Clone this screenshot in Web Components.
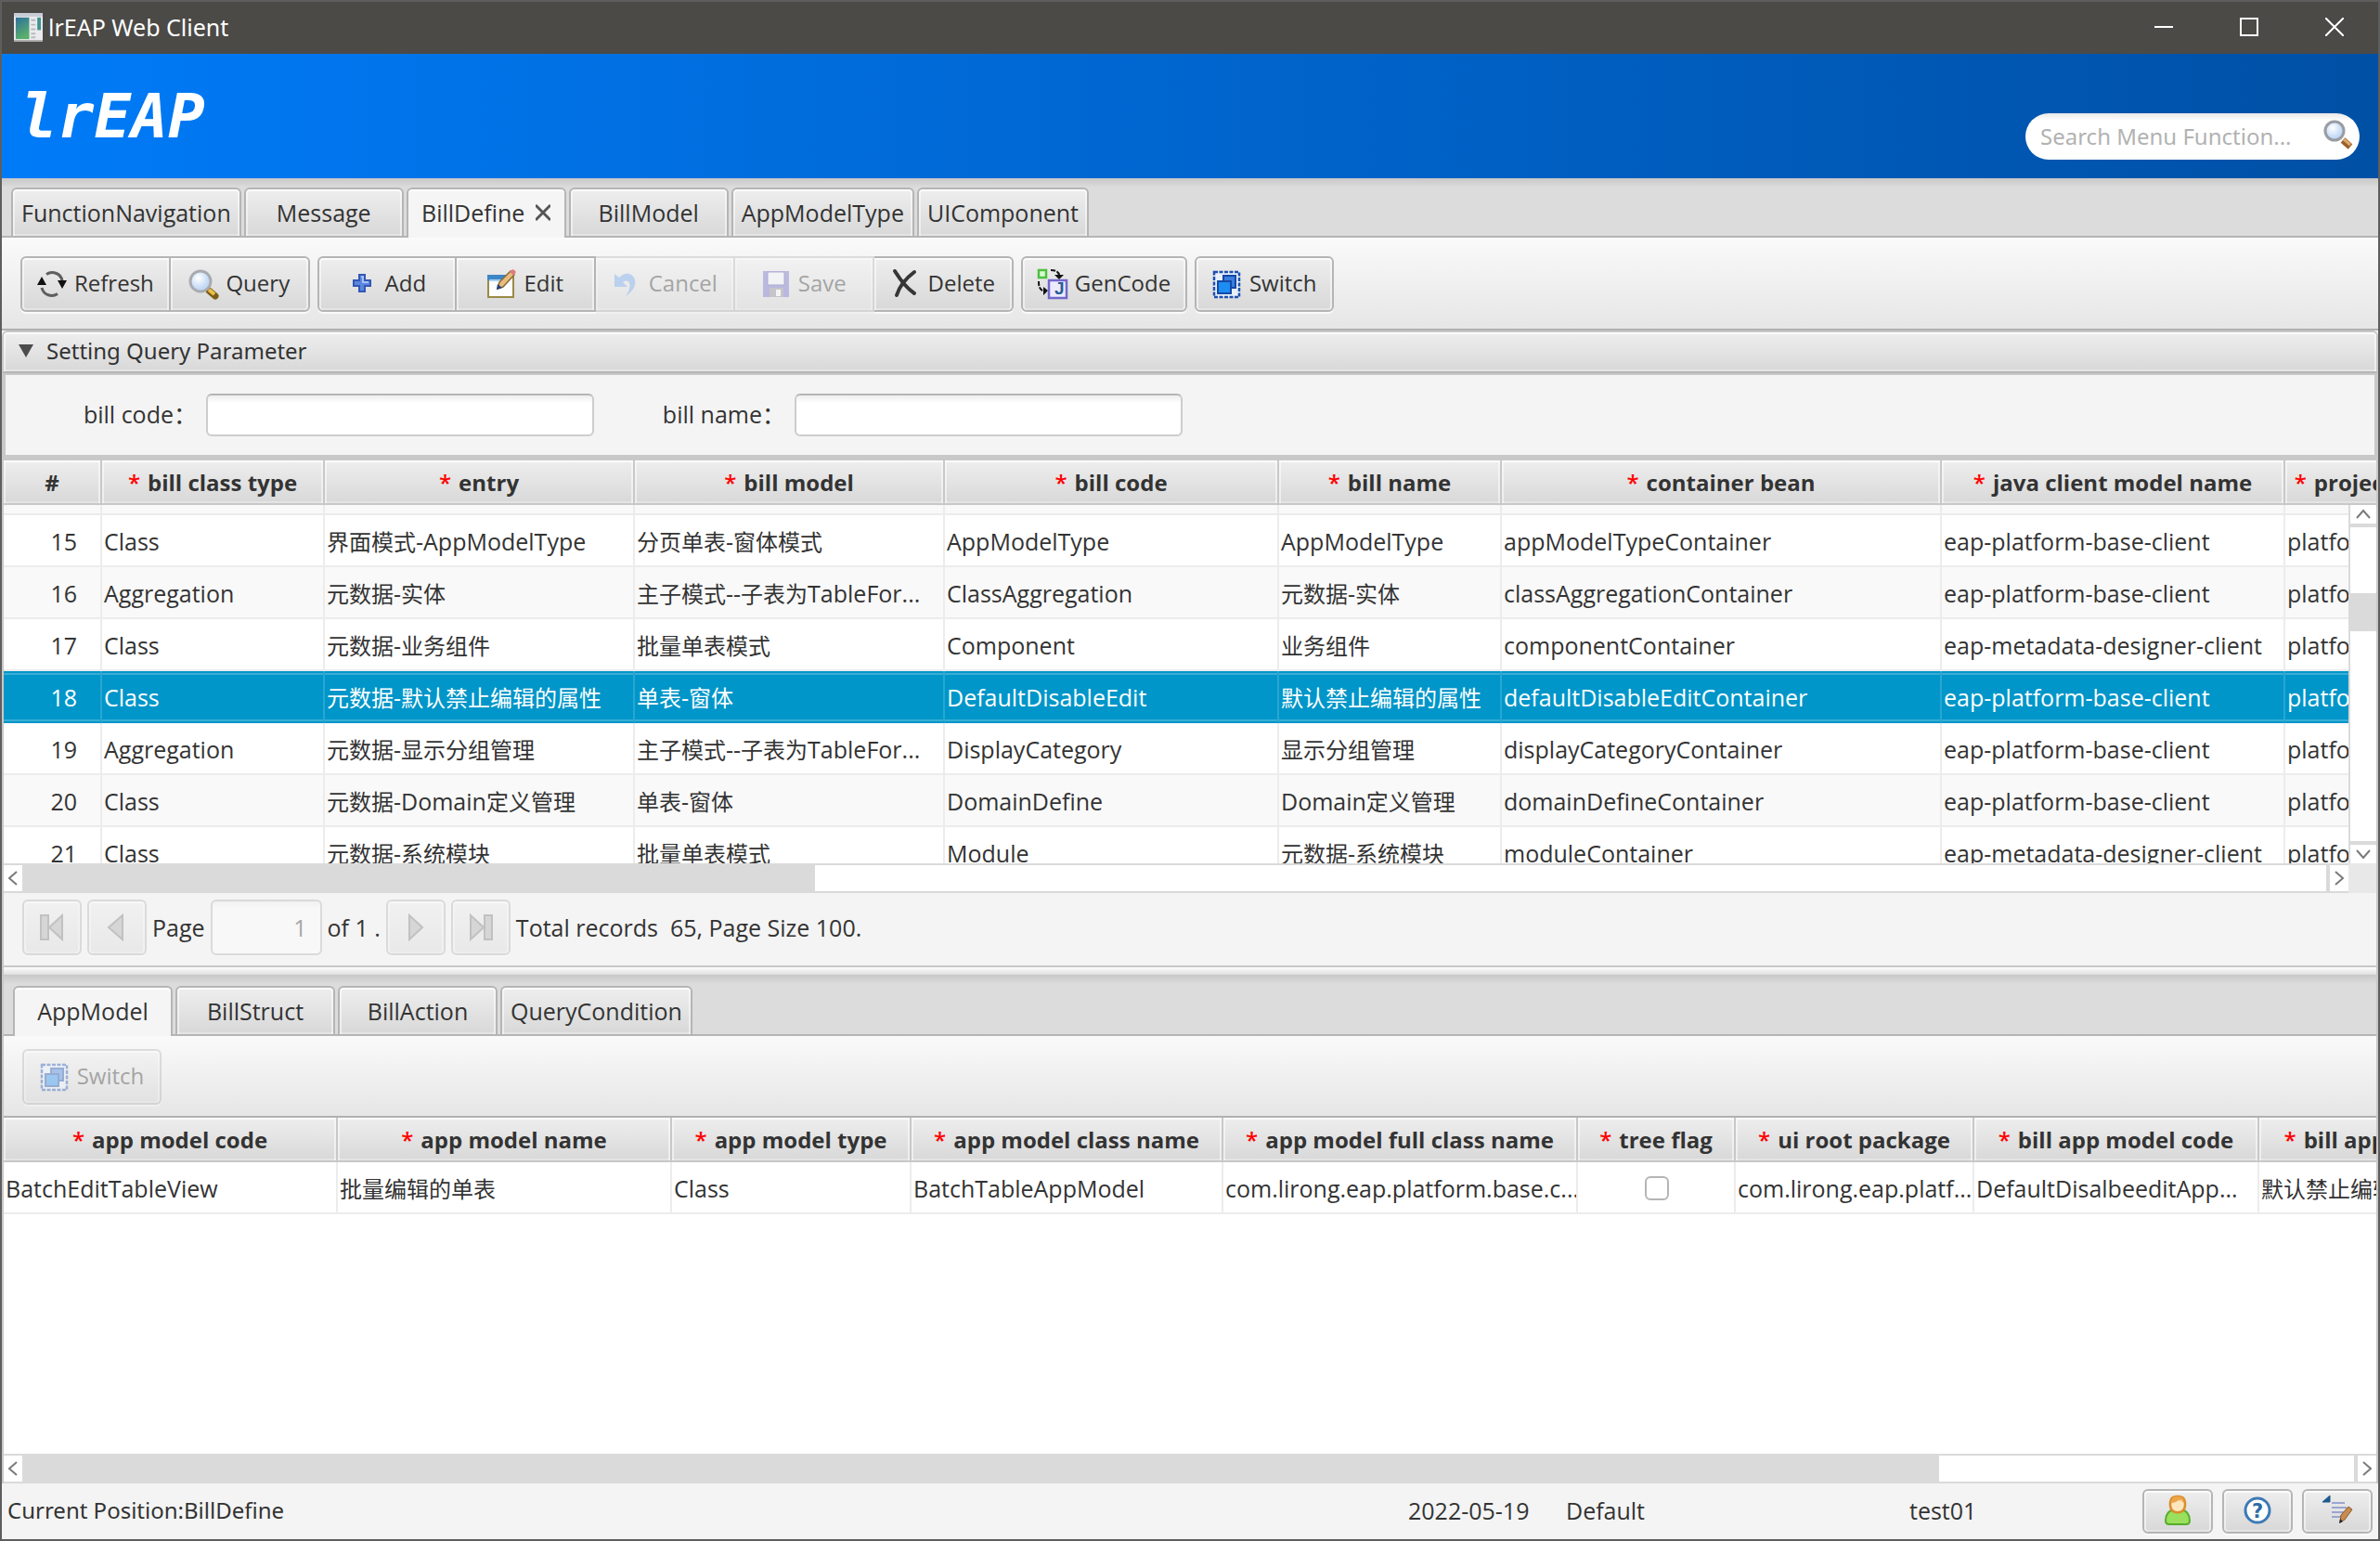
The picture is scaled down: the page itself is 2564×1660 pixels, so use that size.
<!DOCTYPE html>
<html lang="en">
<head>
<meta charset="utf-8">
<title>lrEAP Web Client</title>
<style>
  html, body { margin: 0; height: 100%; }
  body {
    --line: #c8c8c8;
    --edge: #b5b5b5;
    --face: linear-gradient(#eeeeee, #d8d8d8);
    --glow: inset 0 2px #fcfcfc, inset 2px 0 rgba(255,255,255,.5), inset -2px 0 rgba(255,255,255,.5), inset 0 -2px rgba(255,255,255,.3);
    --wide: "Noto Sans", "Noto Sans CJK SC", sans-serif;
    font: 24px "Open Sans", "Noto Sans", "Noto Sans CJK SC", sans-serif;
    color: #333;
    background: #f4f4f4;
  }
</style>
</head>
<body>
<eap-window></eap-window>

<script>
const ICONS = {
  app: `<rect x="0" y="0" width="32" height="32" fill="#e9ebee"/><rect x="0" y="0" width="32" height="4" fill="#c9cdd6"/><rect x="2" y="5" width="15" height="24" fill="url(#a)"/><defs><linearGradient id="a" x2="0.4" y2="1"><stop stop-color="#2f6f9f"/><stop offset="1" stop-color="#58b06a"/></linearGradient></defs><path d="M19 8h5M19 13h5M19 18h5M19 23h5M19 27h5" stroke="#bbb" stroke-width="2"/><rect x="26" y="5" width="4" height="14" fill="#3f9290"/><path d="M0 31h32" stroke="#aaa" stroke-width="2"/>`,
  refresh: `<g fill="none" stroke="#5e5e5e" stroke-width="3"><path d="M10 5.500C16 1.500 25 4 27 12"/><path d="M22 26.500C16 30.500 7 28 5 20"/></g><path d="M0 17l5-9 5 9zM22 12h10l-5 9z" fill="#111"/>`,
  query: `<defs><radialGradient id="l" cx=".4" cy=".35"><stop stop-color="#fff"/><stop offset="1" stop-color="#c3daf6"/></radialGradient></defs><path d="M22 23l7 6" stroke="#7c6016" stroke-width="7" stroke-linecap="round"/><path d="M22 22l6 5" stroke="#ecc04a" stroke-width="4"/><circle cx="13" cy="13" r="11" fill="url(#l)" stroke="#a9abb0" stroke-width="3"/>`,
  search: `<defs><radialGradient id="l" cx=".4" cy=".35"><stop stop-color="#fff"/><stop offset="1" stop-color="#c3daf6"/></radialGradient></defs><path d="M22 21l8 7" stroke="#9a602c" stroke-width="7"/><path d="M23 20l7 6" stroke="#dca66e" stroke-width="3"/><circle cx="13" cy="11" r="10" fill="url(#l)" stroke="#999ca2" stroke-width="3"/>`,
  add: `<path d="M12 6h6v6h6v6h-6v6h-6v-6H6v-6h6z" fill="#5a86e0" stroke="#3358b4" stroke-width="2"/><path d="M14 8h2v6h6" stroke="#a5c1f4" stroke-width="2" fill="none"/>`,
  edit: `<rect x="2" y="7" width="27" height="23" fill="#fbfdff" stroke="#9a8a46" stroke-width="2"/><rect x="1" y="6" width="22" height="6" fill="#3c86c6"/><path d="M3 12h18" stroke="#a8d2f0" stroke-width="2"/><path d="M12 21l2-7L26 2l4 4-12 13z" fill="#e8bc7c" stroke="#8b6a3c" stroke-width="1.500"/><path d="M25 2l4-2 3 3-3 4z" fill="#dd7d78"/><path d="M11 22l1-6 5 4z" fill="#24407c"/>`,
  cancel: `<path d="M3 5v14h14l-5-5c5-4 9 0 7 7-1 4-3 6-4 8 8-5 13-13 9-20C20 3 13 4 8 9z" fill="#6ea2ea"/>`,
  save: `<rect x="2" y="2" width="28" height="28" fill="#6d68c8"/><rect x="7" y="3" width="18" height="14" fill="#f4f6ff" stroke="#4a48a0"/><rect x="9" y="20" width="15" height="10" fill="#8b8b95"/><rect x="16" y="22" width="5" height="7" fill="#fff"/>`,
  delete: `<g fill="none" stroke="#363636" stroke-linecap="round"><path d="M4 2c5 8 12 18 21 24" stroke-width="4"/><path d="M25 3C17 9 9 18 6 28" stroke-width="4"/></g>`,
  gencode: `<rect x="1" y="1" width="8" height="8" fill="#d8fbd0" stroke="#4fbf42" stroke-width="2.500"/><path d="M14 1c7 0 9 3 9 6M1 13c0 6 1 9 6 11" fill="none" stroke="#111" stroke-width="2" stroke-dasharray="5 1.500"/><path d="M18 6h10l-5 5zM6 19v9l5-5z" fill="#111"/><rect x="12" y="12" width="19" height="19" fill="#ecebfc" stroke="#7267cc" stroke-width="2.500"/><text x="18" y="27" font-family="Liberation Sans" font-weight="700" font-size="19" fill="#2c5c98">J</text>`,
  switch: `<rect x="2" y="3" width="27" height="27" fill="#e8f0fb" stroke="#1f50b0" stroke-width="2.500" stroke-dasharray="4 1.500"/><rect x="12" y="7" width="13" height="13" fill="#3b7ddc" stroke="#1548a6" stroke-width="2"/><rect x="6" y="13" width="14" height="13" fill="#1c8df2" stroke="#1548a6" stroke-width="2"/>`,
  first: `<rect x="4" y="3" width="8" height="26"/><path d="M27 3v26L13 16z"/>`,
  prev: `<path d="M22 3v26L7 16z"/>`,
  next: `<path d="M9 3v26l14-13z"/>`,
  last: `<rect x="20" y="3" width="8" height="26"/><path d="M5 3v26l14-13z"/>`,
  user: `<path d="M3 27c0-7 4-11 8-11h10c4 0 8 4 8 11 0 3-1 4-4 4H7c-3 0-4-1-4-4z" fill="#9be05c" stroke="#55ad2c" stroke-width="2"/><path d="M9 4c2-4 12-4 14 0 2 4 1 10-1 12-3 3-9 3-12 0C8 14 7 8 9 4z" fill="#fde6bd" stroke="#d98e2c" stroke-width="2.500"/><path d="M9 8c0-6 3-7 7-7s7 1 7 7c-2-1-3-2-3-4-1 2-2 2-3 1-2 2-5 3-8 3z" fill="#eca648"/>`,
  help: `<circle cx="16" cy="16" r="13" fill="#fff" stroke="#3d7ab5" stroke-width="3"/><text x="16" y="24" text-anchor="middle" font-family="DejaVu Sans" font-weight="700" font-size="21" fill="#2d6ca6">?</text>`,
  note: `<path d="M0 7l8-7v7z" fill="#1d5a90" stroke="#1d5a90"/><path d="M10 8h14M10 13h16M10 18h13M10 23h11" stroke="#9aa5d2" stroke-width="2"/><path d="M19 29l1-8 8-9 4 3-8 11z" fill="#c98c4e" stroke="#8a592b"/><path d="M18 30l1-5 3 3z" fill="#222"/>`
};

function define(name, css, html) {
  const template = document.createElement('template');
  customElements.define(name, class extends HTMLElement {
    connectedCallback() {
      if (this.shadowRoot) return;
      const root = this.attachShadow({ mode: 'open' });
      template.innerHTML = `<style>*{box-sizing:border-box}${css}</style>` + (typeof html === 'function' ? html(this) : html);
      root.append(template.content.cloneNode(true));
    }
  });
}

define('eap-icon', `
  :host { display: block; flex: none; width: 32px; height: 32px; }
  svg { display: block; width: 100%; height: 100%; overflow: visible; }
  .gray { fill: #aaa; stroke: #777; stroke-width: 2; }`,
  el => {
    const name = el.getAttribute('name');
    const gray = ['first', 'prev', 'next', 'last'].includes(name);
    return `<svg viewBox="0 0 32 32" aria-hidden="true"${gray ? ' class="gray"' : ''}>${ICONS[name]}</svg>`;
  });

define('eap-titlebar', `
  :host { display: flex; align-items: center; height: 56px; padding: 0 1px 2px 13px; background: #4b4a47; color: #fff; font-family: var(--wide); }
  .name { flex: 1; padding-left: 6px; font-size: 25px; line-height: 34px; }
  eap-icon { width: 31px; height: 31px; }
  button { width: 92px; height: 54px; padding: 0; border: 0; background: none; display: grid; place-items: center; }
  svg { width: 20px; height: 20px; fill: none; stroke: #fff; stroke-width: 2; }`,
  `<eap-icon name="app"></eap-icon><span class="name"><slot></slot></span>
   <button aria-label="Minimize"><svg viewBox="0 0 20 20"><path d="M0 10h20"/></svg></button>
   <button aria-label="Maximize"><svg viewBox="0 0 20 20"><path d="M1 1h18v18H1z"/></svg></button>
   <button aria-label="Close"><svg viewBox="0 0 20 20"><path d="M0 0l20 20M20 0L0 20"/></svg></button>`);

define('eap-banner', `
  :host { display: flex; justify-content: space-between; align-items: flex-end; height: 134px; padding: 0 20px 20px; background: linear-gradient(90deg, #007bf8, #0050a5); }
  .logo { align-self: flex-start; padding-top: 30px; font: italic 700 66px/76px "DejaVu Sans Mono", monospace; color: #fff; }
  .search { display: flex; align-items: center; width: 360px; height: 50px; padding: 0 8px 2px 16px; border-radius: 25px; background: linear-gradient(#e8e8e8, #fff 8px); }
  input { flex: 1; min-width: 0; padding: 0; border: 0; outline: 0; background: none; font: inherit; font-family: var(--wide); color: #333; }
  input::placeholder { color: #b2b2b2; opacity: 1; }
  button { padding: 0; border: 0; background: none; }`,
  `<div class="logo"><slot></slot></div>
   <div class="search"><input type="text" aria-label="Search" placeholder="Search Menu Function..."><button aria-label="Search"><eap-icon name="search"></eap-icon></button></div>`);

define('eap-tabs', `
  :host { display: flex; gap: 3px; height: 64px; padding: 10px 10px 0; background: linear-gradient(#c8c8c8, #dcdcdc 10px); box-shadow: inset 0 -2px var(--edge); }
  :host([nested]) { height: 66px; padding: 12px 10px 0; }`,
  `<slot></slot>`);

define('eap-tab', `
  :host { display: block; }
  button { display: flex; align-items: center; justify-content: center; gap: 12px; min-width: 172px; height: 52px; padding: 0 9px; border: 2px solid var(--edge); border-bottom: 0; border-radius: 6px 6px 0 0; background: var(--face); box-shadow: var(--glow); font: inherit; font-size: 25px; line-height: 48px; color: #333; }
  :host([selected]) button { height: 54px; padding-bottom: 2px; background: #f5f5f5; box-shadow: inset 0 2px #fff; }
  svg { width: 16px; height: 20px; stroke: #555; stroke-width: 3; }`,
  el => `<button role="tab"><slot></slot>${el.hasAttribute('closable') ? '<svg viewBox="0 0 16 20"><path d="M0 2l16 16M16 2L0 18"/></svg>' : ''}</button>`);

define('eap-toolbar', `
  :host { display: flex; gap: 8px; height: 100px; padding: 20px 20px 0; background: linear-gradient(#fafafa, #e6e6e6); border-bottom: 2px solid #b0b0b0; }
  :host([nested]) { height: 88px; padding: 14px 20px 0; }`,
  `<slot></slot>`);

define('eap-group', `:host { display: flex; }`, `<slot></slot>`);

define('eap-button', `
  :host { display: block; }
  button { display: flex; align-items: center; justify-content: center; gap: 8px; min-width: 150px; height: 60px; padding: 0 16px; border: 2px solid var(--edge); border-radius: 6px; background: var(--face); box-shadow: var(--glow), 0 2px #fafafa; font: inherit; line-height: 34px; color: #333; }
  span { padding-bottom: 2px; }
  :host([pos=first]) button { border-radius: 6px 0 0 6px; }
  :host([pos=mid]) button { border-radius: 0; border-left: 0; }
  :host([pos=last]) button { border-radius: 0 6px 6px 0; border-left: 0; }
  :host([square]) button { min-width: 64px; padding: 0; }
  :host([status]) button { min-width: 76px; height: 48px; padding: 0 0 2px; }
  button:disabled { opacity: .4; }`,
  el => `<button${el.hasAttribute('off') ? ' disabled' : ''} aria-label="${el.textContent || el.getAttribute('icon')}"><eap-icon name="${el.getAttribute('icon')}"></eap-icon>${el.textContent ? '<span><slot></slot></span>' : ''}</button>`);

define('eap-field', `
  :host { display: flex; align-items: center; gap: 10px; }
  label { width: 206px; padding-bottom: 2px; text-align: right; font-size: 25px; line-height: 36px; }
  input { width: 418px; height: 46px; padding: 0 12px; border: 2px solid #cdcdcd; border-top-color: var(--edge); border-radius: 6px; background: linear-gradient(#eee, #fff 8px); font: inherit; outline: 0; }`,
  el => `<label for="f">${el.getAttribute('label')}</label><input id="f" type="text">`);

define('eap-titled', `
  :host { display: block; }
  button { display: flex; align-items: center; gap: 14px; width: 100%; height: 46px; padding: 0 16px 2px; border: 2px solid var(--line); border-bottom-color: var(--edge); border-radius: 6px 6px 0 0; background: var(--face); box-shadow: var(--glow); font: inherit; font-family: var(--wide); line-height: 34px; color: #333; text-align: left; }
  svg { width: 16px; height: 14px; fill: #4c4c4c; }
  .body { display: flex; padding: 20px 0; border: solid var(--line); border-width: 2px 4px 6px; background: #f4f4f4; }`,
  el => `<button aria-expanded="true"><svg viewBox="0 0 16 14"><path d="M0 0h16L8 14z"/></svg>${el.getAttribute('heading')}</button><div class="body"><slot></slot></div>`);

define('eap-scroll', `
  :host { display: flex; background: #fff; border: solid #dadada; border-width: 2px 0; height: 32px; }
  :host([vertical]) { flex-direction: column; border-width: 0 0 0 2px; height: auto; width: 30px; }
  button { flex: 0 0 20px; padding: 0; border: 0; background: #fff; display: grid; place-items: center; }
  :host(:not([vertical])) button:last-child { flex-basis: 24px; border-left: 4px solid #dadada; }
  :host([vertical]) button { flex-basis: 24px; border-bottom: 4px solid #dadada; }
  :host([vertical]) button:last-child { border-bottom: 0; border-top: 4px solid #dadada; }
  svg { width: 16px; height: 16px; fill: none; stroke: #7a7a7a; stroke-width: 2; }
  i { display: block; }
  .thumb { background: #dadada; }`,
  el => {
    const [before, size, after] = el.getAttribute('parts').split(' ');
    const [a, b] = el.hasAttribute('vertical') ? ['M1 12l7-8 7 8', 'M1 4l7 8 7-8'] : ['M12 1L4 8l8 7', 'M4 1l8 7-8 7'];
    return `<button aria-label="Back"><svg viewBox="0 0 16 16"><path d="${a}"/></svg></button><i style="flex:${before}"></i><i class="thumb" style="flex:${size}"></i><i style="flex:${after}"></i><button aria-label="Forward"><svg viewBox="0 0 16 16"><path d="${b}"/></svg></button>`;
  });

const BILLS = {
  cols: [['#', 106], ['bill class type', 240], ['entry', 334], ['bill model', 334], ['bill code', 360], ['bill name', 240], ['container bean', 474], ['java client model name', 370], ['project name', 202]],
  selected: '18',
  rows: [
    ['15', 'Class', '界面模式-AppModelType', '分页单表-窗体模式', 'AppModelType', 'AppModelType', 'appModelTypeContainer', 'eap-platform-base-client', 'platform'],
    ['16', 'Aggregation', '元数据-实体', '主子模式--子表为TableFor...', 'ClassAggregation', '元数据-实体', 'classAggregationContainer', 'eap-platform-base-client', 'platform'],
    ['17', 'Class', '元数据-业务组件', '批量单表模式', 'Component', '业务组件', 'componentContainer', 'eap-metadata-designer-client', 'platform'],
    ['18', 'Class', '元数据-默认禁止编辑的属性', '单表-窗体', 'DefaultDisableEdit', '默认禁止编辑的属性', 'defaultDisableEditContainer', 'eap-platform-base-client', 'platform'],
    ['19', 'Aggregation', '元数据-显示分组管理', '主子模式--子表为TableFor...', 'DisplayCategory', '显示分组管理', 'displayCategoryContainer', 'eap-platform-base-client', 'platform'],
    ['20', 'Class', '元数据-Domain定义管理', '单表-窗体', 'DomainDefine', 'Domain定义管理', 'domainDefineContainer', 'eap-platform-base-client', 'platform'],
    ['21', 'Class', '元数据-系统模块', '批量单表模式', 'Module', '元数据-系统模块', 'moduleContainer', 'eap-metadata-designer-client', 'platform']
  ]
};
const MODELS = {
  cols: [['app model code', 360], ['app model name', 360], ['app model type', 258], ['app model class name', 336], ['app model full class name', 382], ['tree flag', 170], ['ui root package', 257], ['bill app model code', 307], ['bill app model name', 320]],
  rows: [['BatchEditTableView', '批量编辑的单表', 'Class', 'BatchTableAppModel', 'com.lirong.eap.platform.base.c...', false, 'com.lirong.eap.platf...', 'DefaultDisalbeeditApp...', '默认禁止编辑的属性']]
};
const SOURCES = { bills: BILLS, models: MODELS };

define('eap-table', `
  :host { display: grid; grid-template: 48px minmax(0, 1fr) 32px / minmax(0, 1fr) auto; background: #fff; }
  .view { grid-area: 1 / 1 / 3 / 3; overflow: hidden; }
  table { table-layout: fixed; border-collapse: separate; border-spacing: 0; }
  th { height: 48px; padding: 0; border: solid var(--line); border-width: 0 2px 2px 0; background: var(--face); box-shadow: var(--glow); font-weight: 700; white-space: nowrap; overflow: hidden; }
  th b { color: #f00; padding-right: 8px; font-weight: 600; }
  td { height: 56px; padding: 2px 0 0 2px; border: solid #ececec; border-width: 0 2px 2px 0; font-size: 25px; line-height: 40px; white-space: nowrap; overflow: hidden; }
  .cjk { font-size: 24px; }
  td.num { text-align: right; padding-right: 25px; }
  td.check { text-align: center; }
  tr.partial td { height: 11px; padding: 0; background: #f9f9f9; }
  tr.alt td { background: #f9f9f9; }
  tr.sel td { background: #0096c9; color: #fff; border-color: #29a6d1; border-bottom-color: #0096c9; box-shadow: inset 0 2px #0096c9, inset 0 4px #3aadd6, inset 0 -2px #3aadd6; }
  input { appearance: none; display: block; width: 26px; height: 26px; margin: 0 auto; border: 2px solid var(--edge); border-radius: 6px; background: #fff; }
  .v { grid-area: 2 / 2; }
  .h { grid-area: 3 / 1 / 4 / 3; }
  .corner { display: none; grid-area: 3 / 2; background: #e8e8e8; }
  :host([both]) .h { grid-area: 3 / 1; }
  :host([both]) .corner { display: block; }`,
  el => {
    const data = SOURCES[el.getAttribute('source')], both = el.hasAttribute('both');
    const total = data.cols.reduce((sum, c) => sum + c[1], 0);
    const head = data.cols.map(([t, w]) => `<th style="width:${w}px">${t === '#' ? t : `<b>*</b>${t}`}</th>`).join('');
    const cell = (v, i) => v === false
      ? '<td class="check"><input type="checkbox" aria-label="tree flag"></td>'
      : `<td${both && i === 0 ? ' class="num"' : ''}>${v.replace(/[\u4e00-\u9fff]+/g, '<span class="cjk">$&</span>')}</td>`;
    const rows = data.rows.map(r => `<tr class="${r[0] === data.selected ? 'sel' : both && r[0] % 2 === 0 ? 'alt' : ''}">${r.map(cell).join('')}</tr>`).join('');
    return `<div class="view"><table style="width:${total}px"><thead><tr>${head}</tr></thead><tbody>${both ? `<tr class="partial" aria-hidden="true">${data.cols.map(() => '<td></td>').join('')}</tr>` : ''}${rows}</tbody></table></div>
      ${both ? '<eap-scroll class="v" vertical parts="71 41 226"></eap-scroll>' : ''}
      <eap-scroll class="h" parts="${el.getAttribute('parts')}"></eap-scroll><div class="corner"></div>`;
  });

define('eap-pager', `
  :host { display: flex; align-items: center; gap: 6px; height: 80px; padding: 0 20px 4px; background: #f4f4f4; border-bottom: 2px solid var(--line); font-size: 25px; }
  span { white-space: pre; }
  input { width: 120px; height: 60px; padding: 0 14px; border: 2px solid var(--edge); border-radius: 6px; background: linear-gradient(#eee, #fff 8px); font: inherit; color: #333; text-align: right; opacity: .4; }`,
  `<eap-button square off icon="first"></eap-button><eap-button square off icon="prev"></eap-button>
   <label for="p">Page</label><input id="p" type="text" value="1" disabled><span>of 1 .</span>
   <eap-button square off icon="next"></eap-button><eap-button square off icon="last"></eap-button>
   <span>Total records  65, Page Size 100.</span>`);

define('eap-status', `
  :host { display: grid; grid-template-columns: 1fr 170px 370px 252px auto; align-items: center; height: 60px; padding: 0 6px; background: #f4f4f4; font-size: 25px; }
  span { padding: 0 0 2px 1px; line-height: 34px; }
  .place { padding-left: 0; font-family: var(--wide); font-size: 24px; }
  .tools { display: flex; gap: 10px; }`,
  `<span class="place">Current Position:BillDefine</span><span>2022-05-19</span><span>Default</span><span>test01</span>
   <div class="tools"><eap-button status icon="user"></eap-button><eap-button status icon="help"></eap-button><eap-button status icon="note"></eap-button></div>`);

define('eap-window', `
  :host { display: flex; flex-direction: column; height: 100vh; border: 2px solid #5e5e5e; box-sizing: border-box; overflow: hidden; }
  main { flex: 1; min-height: 0; display: flex; flex-direction: column; border: solid var(--line); border-width: 0 2px; }
  .bills { flex: none; height: 466px; }
  .split { flex: none; height: 8px; background: linear-gradient(#fdfdfd, #dedede); }
  .models { flex: 1; min-height: 0; }`,
  `<eap-titlebar>lrEAP Web Client</eap-titlebar>
   <eap-banner>lrEAP</eap-banner>
   <eap-tabs><eap-tab>FunctionNavigation</eap-tab><eap-tab>Message</eap-tab><eap-tab selected closable>BillDefine</eap-tab><eap-tab>BillModel</eap-tab><eap-tab>AppModelType</eap-tab><eap-tab>UIComponent</eap-tab></eap-tabs>
   <eap-toolbar>
     <eap-group><eap-button pos="first" icon="refresh">Refresh</eap-button><eap-button pos="last" icon="query">Query</eap-button></eap-group>
     <eap-group><eap-button pos="first" icon="add">Add</eap-button><eap-button pos="mid" icon="edit">Edit</eap-button><eap-button pos="mid" off icon="cancel">Cancel</eap-button><eap-button pos="mid" off icon="save">Save</eap-button><eap-button pos="last" icon="delete">Delete</eap-button></eap-group>
     <eap-button icon="gencode">GenCode</eap-button>
     <eap-button icon="switch">Switch</eap-button>
   </eap-toolbar>
   <eap-titled heading="Setting Query Parameter"><eap-field label="bill code："></eap-field><eap-field label="bill name："></eap-field></eap-titled>
   <main>
     <eap-table class="bills" source="bills" both parts="0 854 1628"></eap-table>
     <eap-pager></eap-pager>
     <div class="split"></div>
     <eap-tabs nested><eap-tab selected>AppModel</eap-tab><eap-tab>BillStruct</eap-tab><eap-tab>BillAction</eap-tab><eap-tab>QueryCondition</eap-tab></eap-tabs>
     <eap-toolbar nested><eap-button off icon="switch">Switch</eap-button></eap-toolbar>
     <eap-table class="models" source="models" parts="0 2065 447"></eap-table>
   </main>
   <eap-status></eap-status>`);
</script>
</body>
</html>
